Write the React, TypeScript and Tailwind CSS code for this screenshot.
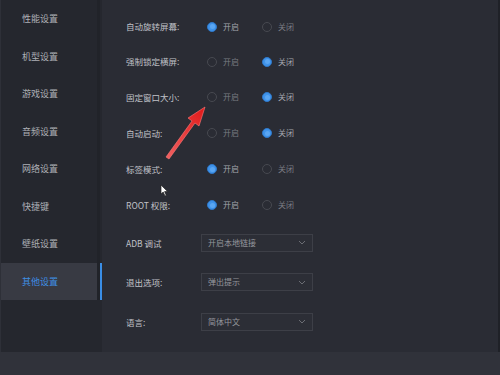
import React from 'react'

const MENU = ['性能设置', '机型设置', '游戏设置', '音频设置', '网络设置', '快捷键', '壁纸设置', '其他设置']

const RADIO_ROWS: { label: string; on: boolean; h: string }[] = [
  { label: '自动旋转屏幕:', on: true, h: 'h-[35px]' },
  { label: '强制锁定横屏:', on: false, h: 'h-[35px]' },
  { label: '固定窗口大小:', on: false, h: 'h-[36px]' },
  { label: '自动启动:', on: false, h: 'h-[36px]' },
  { label: '标签模式:', on: true, h: 'h-[36px]' },
  { label: 'ROOT 权限:', on: true, h: 'h-[36px]' },
]

const SELECT_ROWS = [
  { label: 'ADB 调试', value: '开启本地链接' },
  { label: '退出选项:', value: '弹出提示' },
  { label: '语言:', value: '简体中文' },
]

const font = "font-['Noto_Sans_CJK_SC','Noto_Sans',sans-serif]"

function Radio({ checked, text }: { checked: boolean; text: string }) {
  return (
    <div className="flex items-center gap-[6px] w-[55px]">
      {checked ? (
        <span className="w-[10px] h-[10px] rounded-full border border-[#2f78c8] bg-[#3f93ea] flex items-center justify-center">
          <span className="w-[5px] h-[5px] rounded-full bg-[#5aa6f2]" />
        </span>
      ) : (
        <span className="w-[10px] h-[10px] rounded-full border border-[#474950]" />
      )}
      <span className={`text-[8px] leading-none ${checked ? 'text-[#a4a6ac]' : 'text-[#7a7c83]'}`}>{text}</span>
    </div>
  )
}

export default function App() {
  return (
    <div className={`w-[500px] h-[375px] bg-[#30323a] flex flex-col relative overflow-hidden ${font}`}>
      <div className="flex h-[352px]">
        {/* Sidebar */}
        <div className="w-[102px] bg-[#25272e] border-l border-[#2e3038] flex flex-col">
          {MENU.map((m, i) => {
            const active = i === 7
            return (
              <div key={m} className="flex h-[37.5px]">
                <div className={`flex-1 flex items-center pl-[21px] ${active ? 'bg-[#383a43]' : ''}`}>
                  <span className={`text-[9px] leading-none ${active ? 'text-[#3f8fe4]' : 'text-[#aeb0b6]'}`}>{m}</span>
                </div>
                <div className="w-[3px] bg-[#212329]" />
                <div className={`w-[2px] ${active ? 'bg-[#3a8ee6]' : 'bg-[#25272e]'}`} />
              </div>
            )
          })}
        </div>

        {/* Content */}
        <div className="flex-1 bg-[#2a2c34] border-r-2 border-[#1f2127] pl-[24px] pt-[9px] flex flex-col">
          {RADIO_ROWS.map((r) => (
            <div key={r.label} className={`flex items-center ${r.h}`}>
              <span className="w-[81px] text-[8.5px] leading-none text-[#c0c2c8] whitespace-nowrap">{r.label}</span>
              <Radio checked={r.on} text="开启" />
              <Radio checked={!r.on} text="关闭" />
            </div>
          ))}
          {SELECT_ROWS.map((s) => (
            <div key={s.label} className="flex items-center h-[39.5px]">
              <span className="w-[75px] text-[8.5px] leading-none text-[#c0c2c8] whitespace-nowrap">{s.label}</span>
              <div className="w-[112px] h-[18px] border border-[#3d3f47] bg-[#2c2e36] flex items-center justify-between pl-[6px] pr-[6px]">
                <span className="text-[8px] leading-none text-[#95979d]">{s.value}</span>
                <svg width="8" height="5" viewBox="0 0 8 5">
                  <path d="M1 1 L4 4 L7 1" stroke="#6b6d74" strokeWidth="1" fill="none" />
                </svg>
              </div>
            </div>
          ))}
        </div>
      </div>

      {/* Red annotation arrow */}
      <svg className="absolute left-0 top-0" width="500" height="375" viewBox="0 0 500 375">
        <defs>
          <linearGradient id="ar" x1="167" y1="158" x2="205" y2="107" gradientUnits="userSpaceOnUse">
            <stop offset="0" stopColor="#f06060" />
            <stop offset="1" stopColor="#e01818" />
          </linearGradient>
        </defs>
        <path d="M166 157 L192 121 L188 118 L205 107 L199 126 L195 123 L169 159 Z" fill="url(#ar)" stroke="#ff7a7a" strokeWidth="0.6" />
      </svg>

      {/* Mouse cursor */}
      <svg className="absolute left-[160px] top-[184px]" width="9" height="13" viewBox="0 0 9 13">
        <path d="M1 1 L1 10 L3.2 8 L5 12 L6.3 11.4 L4.6 7.6 L7.6 7.6 Z" fill="#ffffff" stroke="#222" strokeWidth="0.7" />
      </svg>
    </div>
  )
}
